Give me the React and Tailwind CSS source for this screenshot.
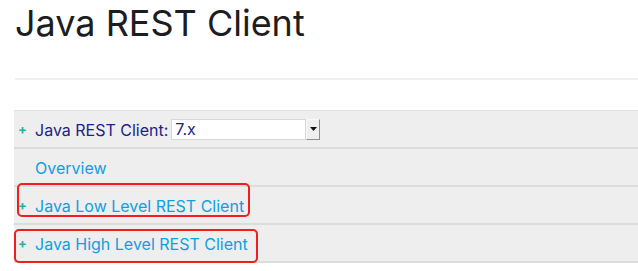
import React from 'react';

const rows = [
    { label: 'Overview', plus: false },
    { label: 'Java Low Level REST Client', plus: true, mark: 'left-[3px] top-[-4px] w-[233px] h-[34px]' },
    { label: 'Java High Level REST Client', plus: true, mark: 'left-0 top-[4px] w-[244px] h-[34px]' },
];

function Plus() {
    return <span className="w-[21px] text-[13px] font-bold text-[#21b39e] leading-none pl-[4px]">+</span>;
}

export default function App() {
    return (
        <div className="w-[638px] h-[271px] overflow-hidden bg-white font-['Inter',sans-serif]">
            <h1 className="pl-[15px] pt-[1px] text-[36px] leading-[44px] text-[#1c1d21] font-normal">
                Java REST Client
            </h1>
            <div className="ml-[15px] mt-[33px] h-[2px] bg-[#efefef]" />

            <div className="ml-[14px] mt-[30px] w-[640px] bg-[#eeeeee] border-t border-[#e2e2e2]">
                {/* version picker */}
                <div className="h-[38px] flex items-center border-b-2 border-[#dcdcdc] text-[16px]">
                    <Plus />
                    <span className="text-[#1b2387] pt-[2px]">Java REST Client:</span>
                    <div className="ml-[3px] flex h-[21px]">
                        <div className="w-[135px] bg-white border border-[#d8d8d8] pl-[3px] leading-[19px] text-[#1b2387]">7.x</div>
                        <div className="w-[14px] flex items-center justify-center bg-[#efefef] border border-t-[#f8f8f8] border-l-[#f8f8f8] border-r-[#8e8e8e] border-b-[#8e8e8e]">
                            <svg width="7" height="4" viewBox="0 0 7 4">
                                <path d="M0 0h7L3.5 4z" fill="#111" />
                            </svg>
                        </div>
                    </div>
                </div>

                {rows.map((row, i) => (
                    <div key={i} className="relative h-[38px] flex items-center border-b-2 border-[#dcdcdc] text-[16px]">
                        {row.plus ? <Plus /> : <span className="w-[21px]" />}
                        <span className="text-[#0ea0df] pt-[2px]">{row.label}</span>
                        {row.mark &&
                            <div className={'absolute border-2 border-[#f21d1d] rounded-[5px] ' + row.mark} />
                        }
                    </div>
                ))}
            </div>
        </div>
    );
}
